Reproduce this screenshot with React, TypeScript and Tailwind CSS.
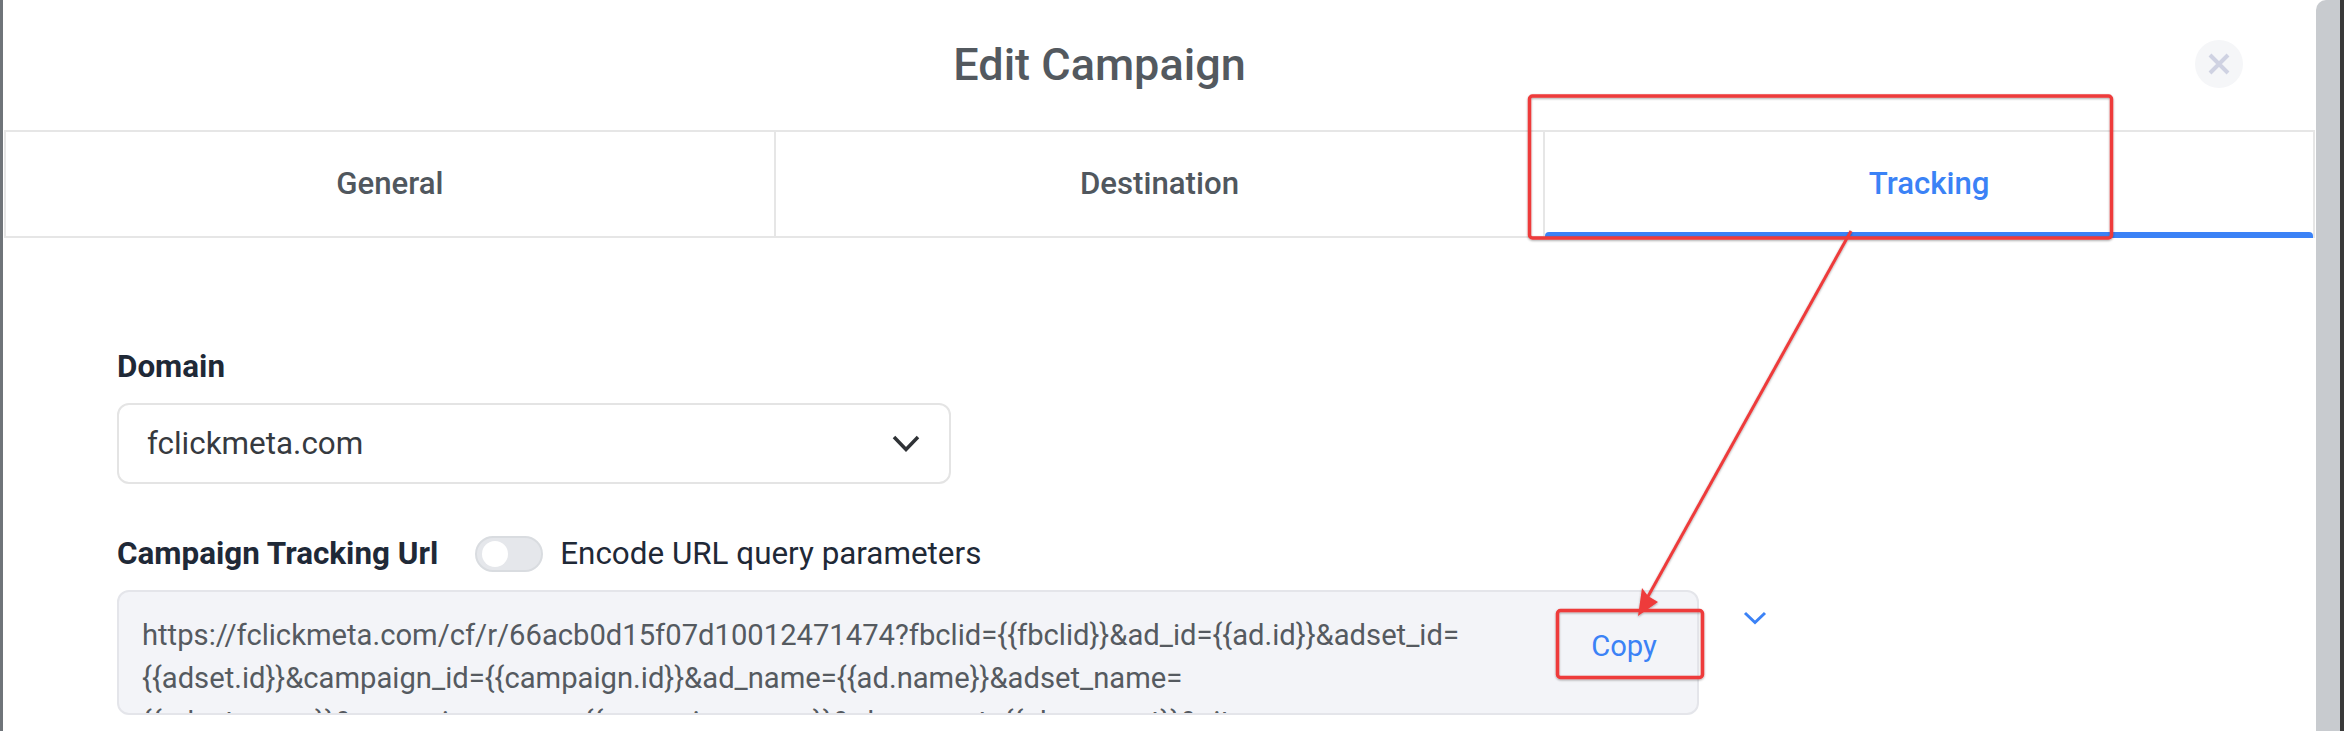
import React from "react";

function Tab({ label, active, last }: { label: string; active?: boolean; last?: boolean }) {
  return (
    <div
      className={
        "relative flex flex-1 items-center justify-center border-l-2 border-[#e6e6e6] text-[31.2px] font-medium " +
        (last ? "border-r-2 " : "") +
        (active ? "text-[#3b82f6]" : "text-[#50575e]")
      }
    >
      {label}
      {active && (
        <div className="absolute bottom-[-2px] left-0 right-0 h-[6px] rounded-t-[4px] bg-[#3b82f6]" />
      )}
    </div>
  );
}

export default function App() {
  const lines = [
    "https://fclickmeta.com/cf/r/66acb0d15f07d10012471474?fbclid={{fbclid}}&ad_id={{ad.id}}&adset_id=",
    "{{adset.id}}&campaign_id={{campaign.id}}&ad_name={{ad.name}}&adset_name=",
    "{{adset.name}}&campaign_name={{campaign.name}}&placement={{placement}}&site_source_name=",
  ];
  return (
    <div className="relative flex h-[731px] w-[2344px] overflow-hidden bg-white font-['Roboto','Noto_Sans',sans-serif]">
      <div className="w-[3px] shrink-0 bg-[#6f7479]" />
      <div className="flex w-[2313px] shrink-0 flex-col bg-white">
        {/* header */}
        <div className="flex h-[130px] items-center pl-[1px] pr-[73px]">
          <h2 className="flex-1 text-center text-[45px] font-medium leading-[52px] text-[#53595f]">
            Edit Campaign
          </h2>
          <button className="mb-[3px] flex h-[48px] w-[48px] items-center justify-center rounded-full bg-[#f5f6f8]">
            <svg width="22" height="22" viewBox="0 0 22 22">
              <path d="M2 2 L20 20 M20 2 L2 20" stroke="#cfd2e2" strokeWidth="4" strokeLinecap="butt" />
            </svg>
          </button>
        </div>
        {/* tabs */}
        <div className="mx-[1px] flex h-[108px] border-y-2 border-[#e6e6e6]">
          <Tab label="General" />
          <Tab label="Destination" />
          <Tab label="Tracking" active last />
        </div>
        {/* body */}
        <div className="flex flex-col pl-[114px] pt-[111px]">
          <div className="text-[31.4px] font-bold leading-[36px] text-[#1f2937]">Domain</div>
          <div className="mt-[18px] flex h-[81px] w-[834px] items-center justify-between rounded-[12px] border-2 border-[#e4e4e4] pl-[28px] pr-[29px]">
            <span className="text-[31.4px] leading-[36px] text-[#363a3f]">fclickmeta.com</span>
            <svg width="28" height="17" viewBox="0 0 28 17">
              <polyline points="2,2 14,14.5 26,2" fill="none" stroke="#2f3236" strokeWidth="3.5" />
            </svg>
          </div>
          <div className="mt-[52px] flex h-[36px] items-center">
            <span className="text-[31.4px] font-bold leading-[36px] text-[#1f2937]">Campaign Tracking Url</span>
            <div className="ml-[37px] flex h-[36px] w-[68px] items-center rounded-full border-2 border-[#d9dce0] bg-[#e5e7eb] px-[3px]">
              <div className="ml-[2px] h-[26px] w-[26px] rounded-full bg-white" />
            </div>
            <span className="ml-[17px] text-[31.4px] leading-[36px] text-[#1f2937]">Encode URL query parameters</span>
          </div>
          <div className="mt-[18px] flex items-start">
            <div className="flex h-[125px] w-[1582px] items-start overflow-hidden rounded-[12px] border-2 border-[#e4e5ea] bg-[#f3f4f8] pl-[23px] pt-[22px]">
              <div className="min-w-0 flex-1 overflow-hidden text-[29.2px] leading-[43.3px] text-[#555a60]">
                {lines.map((l, i) => (
                  <div key={i} className="whitespace-nowrap">
                    {l}
                  </div>
                ))}
              </div>
              <button className="mr-[8px] flex h-[64px] w-[130px] shrink-0 items-center justify-center text-[29.2px] leading-[34px] text-[#3b82f6]">
                Copy
              </button>
            </div>
            <svg className="ml-[44px] mt-[21px]" width="24" height="14" viewBox="0 0 24 14">
              <polyline points="2,2 12,11.5 22,2" fill="none" stroke="#3b82f6" strokeWidth="3" />
            </svg>
          </div>
        </div>
      </div>
      <div className="w-[24px] shrink-0 rounded-tl-[10px] bg-[#c8cbcf]" />
      <div className="w-[4px] shrink-0 bg-[#393939]" />

      {/* annotation overlay */}
      <svg className="pointer-events-none absolute left-0 top-0" width="2344" height="731" viewBox="0 0 2344 731">
        <defs>
          <filter id="sh" x="-5%" y="-5%" width="110%" height="110%">
            <feDropShadow dx="0" dy="1" stdDeviation="1" floodColor="#000" floodOpacity="0.35" />
          </filter>
        </defs>
        <g filter="url(#sh)">
          <rect x="1529.5" y="96" width="582" height="142" rx="3" fill="none" stroke="#ee3b3b" strokeWidth="3.5" />
          <rect x="1557.5" y="610.5" width="145" height="67" rx="3" fill="none" stroke="#ee3b3b" strokeWidth="3.5" />
          <line x1="1851" y1="231" x2="1646" y2="600" stroke="#ee3b3b" strokeWidth="3" />
          <polygon points="1638,616 1642,588 1648,596 1658,602" fill="#ee3b3b" />
        </g>
      </svg>
    </div>
  );
}
